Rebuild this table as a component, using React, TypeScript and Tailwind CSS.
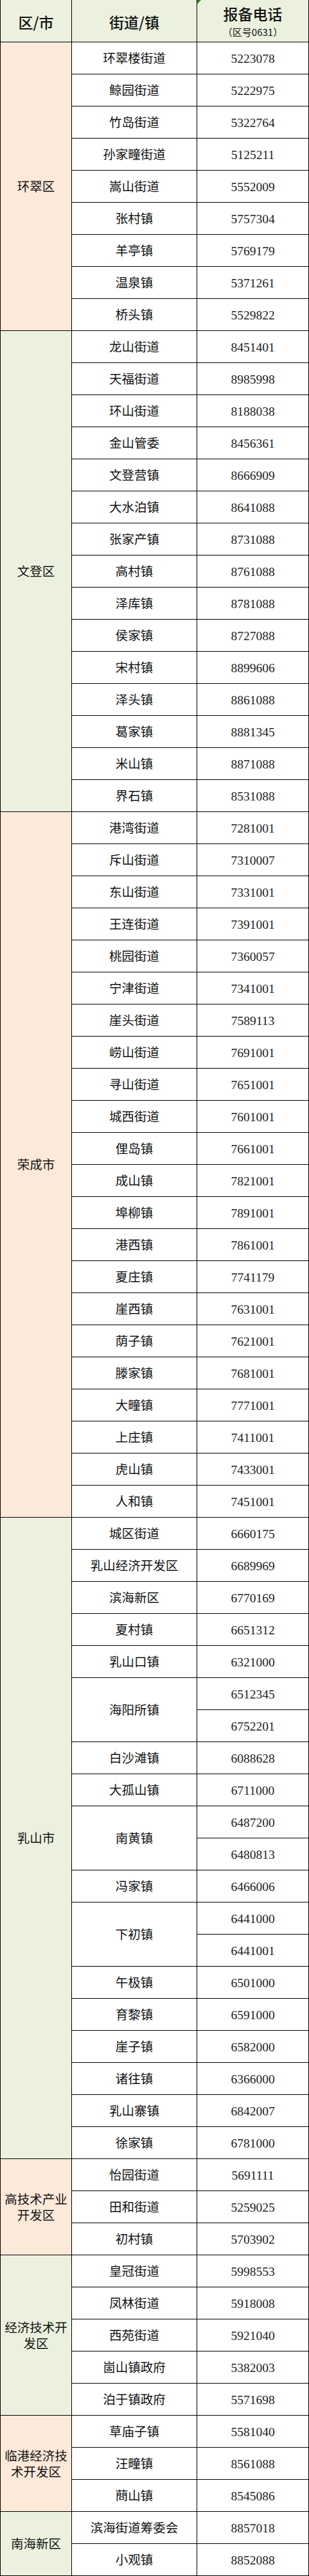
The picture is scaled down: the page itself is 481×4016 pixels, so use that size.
import React from "react";

type Entry = { name: string; phones: string[] };
type Group = { district: string; bg: string; entries: Entry[] };

const PEACH = "bg-[#fde9d9]";
const GREEN = "bg-[#ebf1de]";

const e = (name: string, ...phones: string[]): Entry => ({ name, phones });

const groups: Group[] = [
  {
    district: "环翠区",
    bg: PEACH,
    entries: [
      e("环翠楼街道", "5223078"),
      e("鲸园街道", "5222975"),
      e("竹岛街道", "5322764"),
      e("孙家疃街道", "5125211"),
      e("嵩山街道", "5552009"),
      e("张村镇", "5757304"),
      e("羊亭镇", "5769179"),
      e("温泉镇", "5371261"),
      e("桥头镇", "5529822"),
    ],
  },
  {
    district: "文登区",
    bg: GREEN,
    entries: [
      e("龙山街道", "8451401"),
      e("天福街道", "8985998"),
      e("环山街道", "8188038"),
      e("金山管委", "8456361"),
      e("文登营镇", "8666909"),
      e("大水泊镇", "8641088"),
      e("张家产镇", "8731088"),
      e("高村镇", "8761088"),
      e("泽库镇", "8781088"),
      e("侯家镇", "8727088"),
      e("宋村镇", "8899606"),
      e("泽头镇", "8861088"),
      e("葛家镇", "8881345"),
      e("米山镇", "8871088"),
      e("界石镇", "8531088"),
    ],
  },
  {
    district: "荣成市",
    bg: PEACH,
    entries: [
      e("港湾街道", "7281001"),
      e("斥山街道", "7310007"),
      e("东山街道", "7331001"),
      e("王连街道", "7391001"),
      e("桃园街道", "7360057"),
      e("宁津街道", "7341001"),
      e("崖头街道", "7589113"),
      e("崂山街道", "7691001"),
      e("寻山街道", "7651001"),
      e("城西街道", "7601001"),
      e("俚岛镇", "7661001"),
      e("成山镇", "7821001"),
      e("埠柳镇", "7891001"),
      e("港西镇", "7861001"),
      e("夏庄镇", "7741179"),
      e("崖西镇", "7631001"),
      e("荫子镇", "7621001"),
      e("滕家镇", "7681001"),
      e("大疃镇", "7771001"),
      e("上庄镇", "7411001"),
      e("虎山镇", "7433001"),
      e("人和镇", "7451001"),
    ],
  },
  {
    district: "乳山市",
    bg: GREEN,
    entries: [
      e("城区街道", "6660175"),
      e("乳山经济开发区", "6689969"),
      e("滨海新区", "6770169"),
      e("夏村镇", "6651312"),
      e("乳山口镇", "6321000"),
      e("海阳所镇", "6512345", "6752201"),
      e("白沙滩镇", "6088628"),
      e("大孤山镇", "6711000"),
      e("南黄镇", "6487200", "6480813"),
      e("冯家镇", "6466006"),
      e("下初镇", "6441000", "6441001"),
      e("午极镇", "6501000"),
      e("育黎镇", "6591000"),
      e("崖子镇", "6582000"),
      e("诸往镇", "6366000"),
      e("乳山寨镇", "6842007"),
      e("徐家镇", "6781000"),
    ],
  },
  {
    district: "高技术产业开发区",
    bg: PEACH,
    entries: [
      e("怡园街道", "5691111"),
      e("田和街道", "5259025"),
      e("初村镇", "5703902"),
    ],
  },
  {
    district: "经济技术开发区",
    bg: GREEN,
    entries: [
      e("皇冠街道", "5998553"),
      e("凤林街道", "5918008"),
      e("西苑街道", "5921040"),
      e("崮山镇政府", "5382003"),
      e("泊于镇政府", "5571698"),
    ],
  },
  {
    district: "临港经济技术开发区",
    bg: PEACH,
    entries: [
      e("草庙子镇", "5581040"),
      e("汪疃镇", "8561088"),
      e("蔄山镇", "8545086"),
    ],
  },
  {
    district: "南海新区",
    bg: GREEN,
    entries: [
      e("滨海街道筹委会", "8857018"),
      e("小观镇", "8852088"),
    ],
  },
];

const FONT = "[font-family:'Liberation_Serif','Noto_Sans_CJK_SC',serif]";

function GroupBlock({ g }: { g: Group }) {
  return (
    <div className="flex">
      <div
        className={`w-[111px] shrink-0 border-l border-b border-black ${g.bg} flex items-center justify-center px-[3px] pt-[2px] text-center text-[19.5px] leading-[25px] text-[#111]`}
      >
        {g.district}
      </div>
      <div className="flex flex-col">
        {g.entries.map((en) => (
          <div key={en.name} className="flex">
            <div className="w-[195px] shrink-0 border-l border-b border-black bg-white flex items-center justify-center pt-[3px] text-[19.5px] text-[#111]">
              {en.name}
            </div>
            <div className="flex w-[175px] flex-col">
              {en.phones.map((p) => (
                <div
                  key={p}
                  className="h-[50px] border-l border-r border-b border-black bg-white flex items-center justify-center pt-[3px] text-[19.5px] text-[#222]"
                >
                  {p}
                </div>
              ))}
            </div>
          </div>
        ))}
      </div>
    </div>
  );
}

export default function App() {
  return (
    <div className={`w-[481px] bg-white ${FONT}`}>
      <div className="flex h-[66px] bg-[#ebf1de]">
        <div className="w-[111px] shrink-0 border-l border-b border-black flex items-center justify-center pt-[4px] [font-family:'Noto_Sans_CJK_SC',sans-serif] text-[23px] font-medium text-[#111]">
          区/市
        </div>
        <div className="w-[195px] shrink-0 border-l border-b border-black flex items-center justify-center pt-[4px] [font-family:'Noto_Sans_CJK_SC',sans-serif] text-[23px] font-medium text-[#111]">
          街道/镇
        </div>
        <div className="relative w-[175px] shrink-0 border-l border-r border-b border-black flex flex-col items-center justify-start [font-family:'Noto_Sans_CJK_SC',sans-serif] text-[#111]">
          <svg className="absolute left-0 top-0" width="6" height="6" viewBox="0 0 6 6">
            <polygon points="0,0 6,0 0,6" fill="#1a8a1a" />
          </svg>
          <div className="mt-[4px] text-[23px] font-medium leading-[34px]">报备电话</div>
          <div className="text-[15px] leading-[24px]">（区号0631）</div>
        </div>
      </div>
      {groups.map((g) => (
        <GroupBlock key={g.district} g={g} />
      ))}
    </div>
  );
}
